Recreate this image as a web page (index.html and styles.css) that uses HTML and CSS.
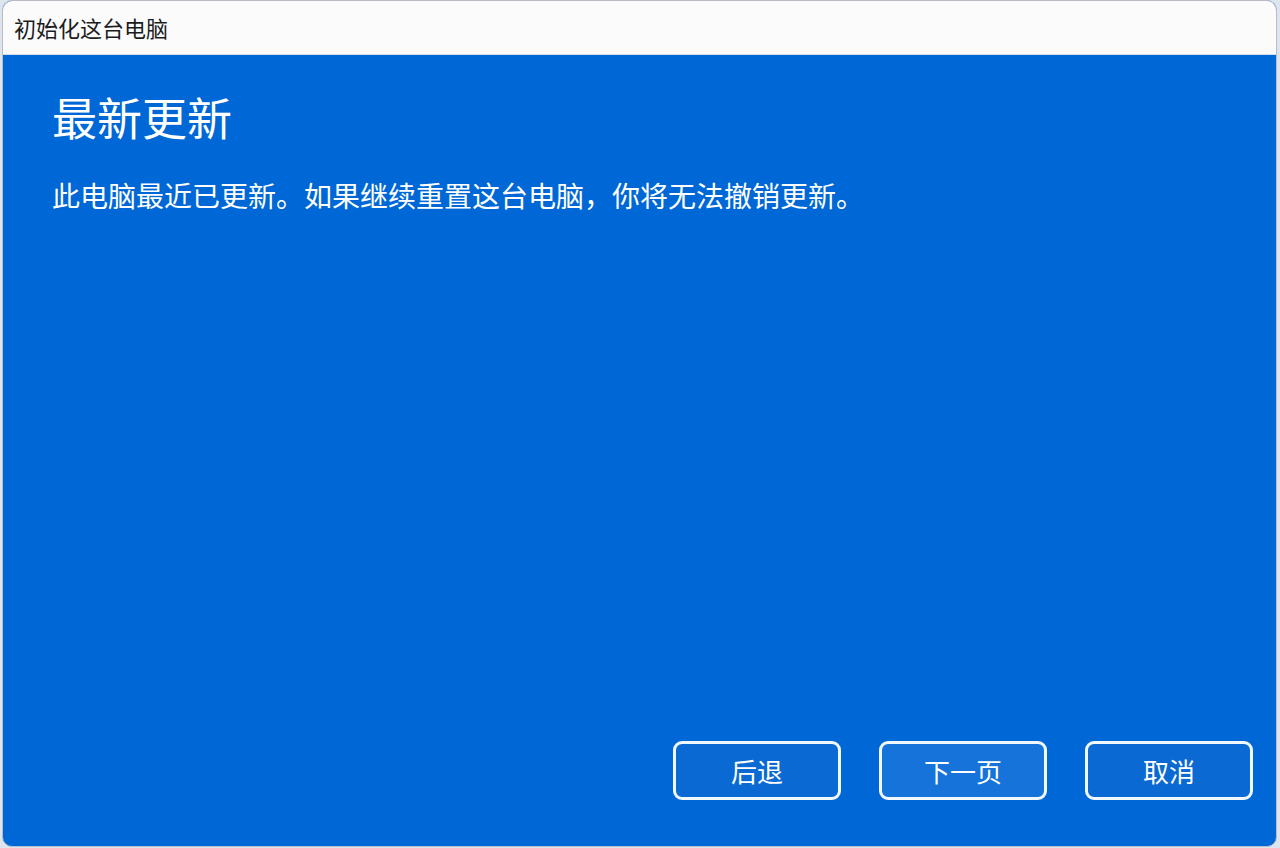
FILE: index.html
```html
<!DOCTYPE html>
<html lang="zh-CN">
<head>
<meta charset="utf-8">
<title>初始化这台电脑</title>
<link rel="stylesheet" href="styles.css">
</head>
<body>
<div class="window">
  <div class="titlebar">初始化这台电脑</div>
  <div class="content">
    <h1 class="heading">最新更新</h1>
    <p class="desc">此电脑最近已更新。如果继续重置这台电脑，你将无法撤销更新。</p>
    <div class="actions">
      <button class="btn">后退</button>
      <button class="btn btn-primary">下一页</button>
      <button class="btn">取消</button>
    </div>
  </div>
</div>
</body>
</html>
```
FILE: styles.css
```css
html, body {
  margin: 0;
  padding: 0;
  height: 100%;
}
body {
  background: #dde6ef;
  font-family: "Noto Sans CJK SC", "Noto Sans", sans-serif;
  overflow: hidden;
}
.window {
  box-sizing: border-box;
  margin: 0 3px 0 2px;
  height: 847px;
  border: 1px solid #b9bcc2;
  border-radius: 10px;
  overflow: hidden;
  display: flex;
  flex-direction: column;
  background: #0068d6;
}
.titlebar {
  height: 53px;
  flex: none;
  background: #fbfbfc;
  color: #1c1c1c;
  font-size: 22px;
  line-height: 53px;
  padding-left: 11px;
  border-bottom: 1px solid #d5dde8;
}
.content {
  flex: 1;
  display: flex;
  flex-direction: column;
  padding: 34px 23px 46px 49px;
  color: #ffffff;
}
.heading {
  margin: 0;
  font-size: 45px;
  font-weight: 400;
  line-height: 56px;
}
.desc {
  margin: 30px 0 0;
  font-size: 28px;
  line-height: 40px;
}
.actions {
  margin-top: auto;
  display: flex;
  justify-content: flex-end;
  gap: 38px;
}
.btn {
  box-sizing: border-box;
  width: 168px;
  height: 59px;
  border: 3px solid #f2f8ff;
  border-radius: 9px;
  background: #0a69d3;
  color: #ffffff;
  font-family: inherit;
  font-size: 26px;
  padding: 0;
}
.btn-primary {
  background: #1573d9;
}
```
